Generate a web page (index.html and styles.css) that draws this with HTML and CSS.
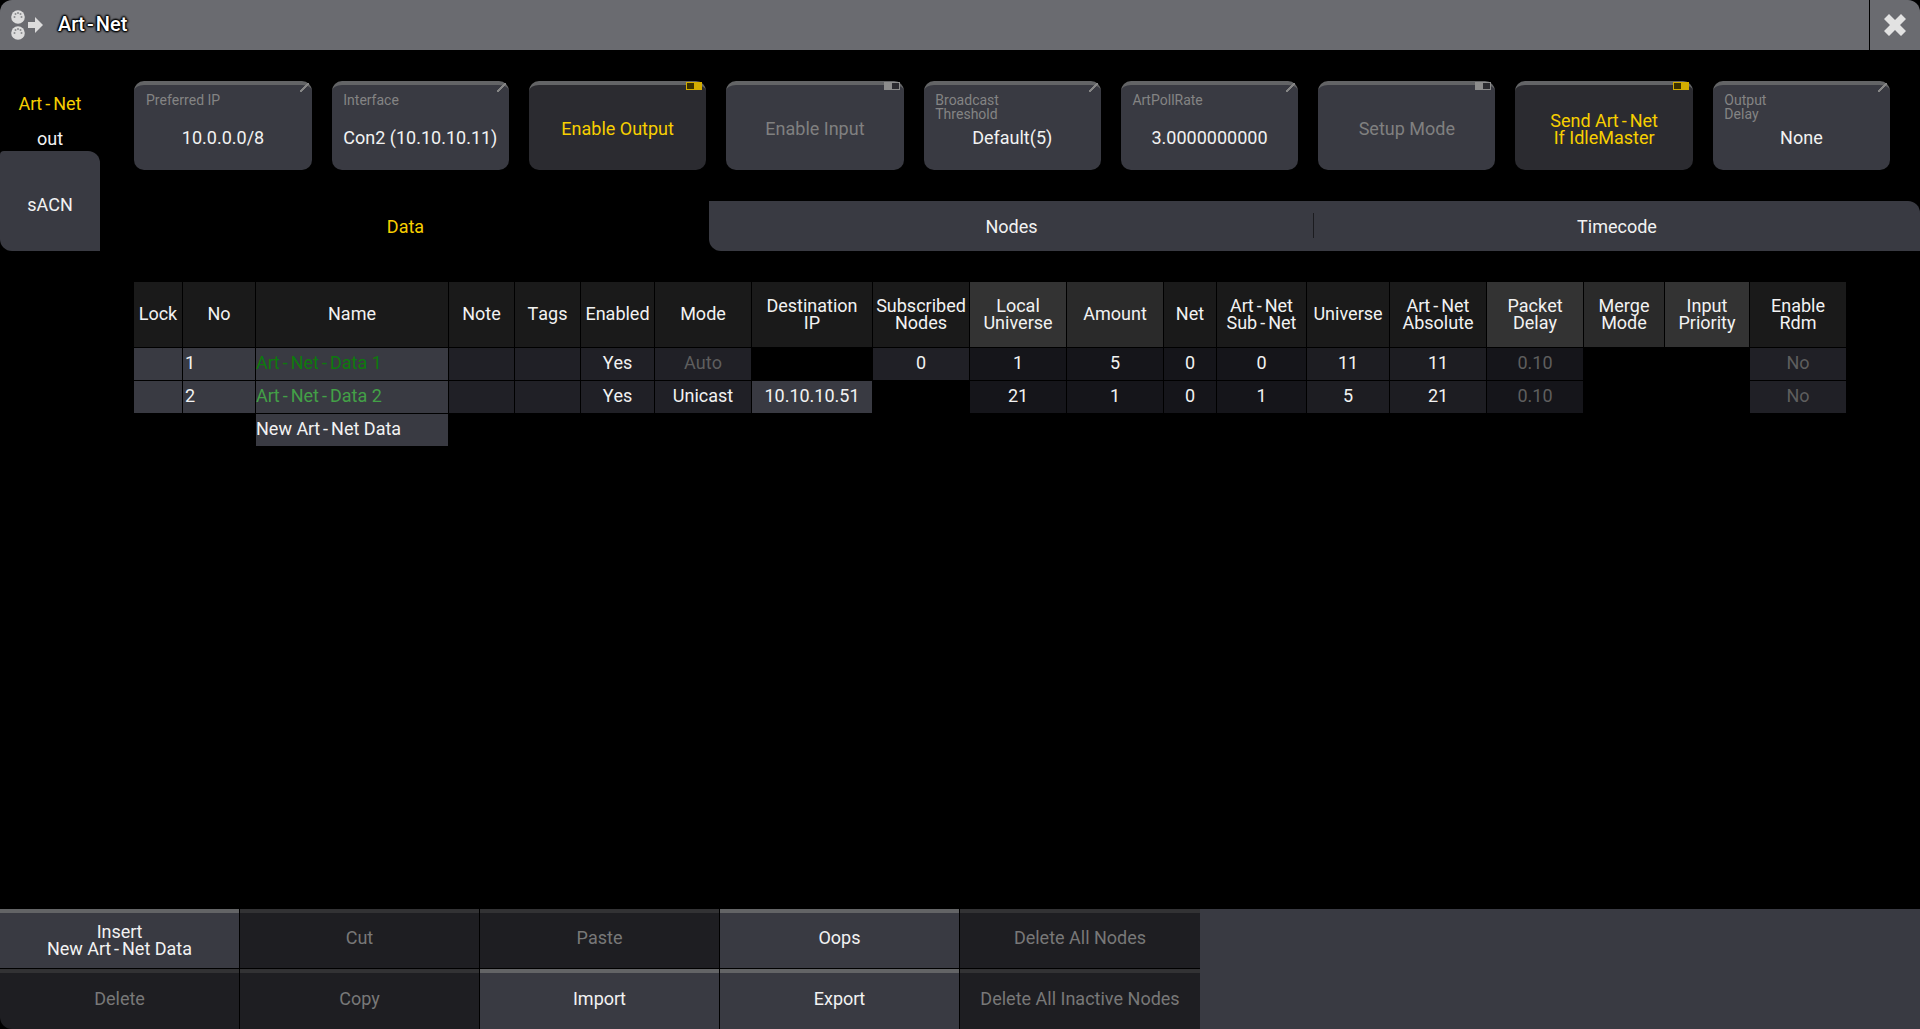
FILE: index.html
```html
<!DOCTYPE html>
<html lang="en">
<head>
  <meta charset="UTF-8">
  <meta name="viewport" content="width=device-width, initial-scale=1.0">
  <title>Art-Net</title>
  <link rel="stylesheet" href="styles.css">
</head>
<body>
  <div class="titlebar">
    <svg class="title-icon" width="46" height="40" viewBox="0 0 46 40">
      <circle cx="18" cy="17" r="6.8" fill="#dcdcdc"/>
      <circle cx="18" cy="33" r="6.8" fill="#dcdcdc"/>
      <g fill="#8a8b8e">
        <circle cx="14.5" cy="17" r="1"/><circle cx="15.5" cy="14" r="1"/><circle cx="18" cy="13" r="1"/><circle cx="20.5" cy="14" r="1"/><circle cx="21.5" cy="17" r="1"/>
        <circle cx="14.5" cy="33" r="1"/><circle cx="15.5" cy="30" r="1"/><circle cx="18" cy="29" r="1"/><circle cx="20.5" cy="30" r="1"/><circle cx="21.5" cy="33" r="1"/>
      </g>
      <path d="M28 22h7v-5l8 8-8 8v-5h-7z" fill="#dcdcdc"/>
    </svg>
    <span class="title-text">Art<span class="hy-s">-</span>Net</span>
    <div class="close">
      <svg width="24" height="24" viewBox="0 0 24 24"><path d="M6 1l6 6 6-6 5 5-6 6 6 6-5 5-6-6-6 6-5-5 6-6-6-6z" fill="#e2e2e2"/></svg>
    </div>
  </div>

  <div class="content">
    <div class="side">
      <div class="side-label yellow">Art<span class="hy">-</span>Net</div>
      <div class="side-label out">out</div>
      <div class="side-tab">sACN</div>
    </div>

    <div class="panel">
      <div class="toolbar">
        <div class="btn edit"><div class="btn-label">Preferred IP</div><div class="btn-value">10.0.0.0/8</div></div>
        <div class="btn edit"><div class="btn-label">Interface</div><div class="btn-value">Con2 (10.10.10.11)</div></div>
        <div class="btn plain on"><i class="toggle"></i>Enable Output</div>
        <div class="btn plain off"><i class="toggle"></i>Enable Input</div>
        <div class="btn edit"><div class="btn-label">Broadcast<br>Threshold</div><div class="btn-value">Default(5)</div></div>
        <div class="btn edit"><div class="btn-label">ArtPollRate</div><div class="btn-value">3.0000000000</div></div>
        <div class="btn plain off"><i class="toggle"></i>Setup Mode</div>
        <div class="btn plain on"><i class="toggle"></i><div>Send Art<span class="hy">-</span>Net<br>If IdleMaster</div></div>
        <div class="btn edit"><div class="btn-label">Output<br>Delay</div><div class="btn-value">None</div></div>
      </div>

      <div class="tabs">
        <div class="tab active">Data</div>
        <div class="tab nodes">Nodes</div>
        <div class="tab timecode">Timecode</div>
      </div>

      <div class="grid">
        <div class="th">Lock</div>
        <div class="th">No</div>
        <div class="th">Name</div>
        <div class="th">Note</div>
        <div class="th">Tags</div>
        <div class="th">Enabled</div>
        <div class="th">Mode</div>
        <div class="th two">Destination<br>IP</div>
        <div class="th two">Subscribed<br>Nodes</div>
        <div class="th two hi">Local<br>Universe</div>
        <div class="th mid">Amount</div>
        <div class="th">Net</div>
        <div class="th two"><div>Art<span class="hy">-</span>Net<br>Sub<span class="hy">-</span>Net</div></div>
        <div class="th">Universe</div>
        <div class="th two"><div>Art<span class="hy">-</span>Net<br>Absolute</div></div>
        <div class="th two hi">Packet<br>Delay</div>
        <div class="th two mid">Merge<br>Mode</div>
        <div class="th two hi">Input<br>Priority</div>
        <div class="th two">Enable<br>Rdm</div>

        <div class="td edit-cell"></div>
        <div class="td edit-cell left num">1</div>
        <div class="td edit-cell left green-dark"><span>Art<span class="hy">-</span>Net<span class="hy">-</span>Data 1</span></div>
        <div class="td soft"></div>
        <div class="td soft"></div>
        <div class="td soft">Yes</div>
        <div class="td soft dim">Auto</div>
        <div class="td"></div>
        <div class="td soft">0</div>
        <div class="td deep">1</div>
        <div class="td deep">5</div>
        <div class="td deep">0</div>
        <div class="td deep">0</div>
        <div class="td soft2">11</div>
        <div class="td soft2">11</div>
        <div class="td deep dim">0.10</div>
        <div class="td"></div>
        <div class="td"></div>
        <div class="td soft dim">No</div>

        <div class="td edit-cell"></div>
        <div class="td edit-cell left num">2</div>
        <div class="td edit-cell left green"><span>Art<span class="hy">-</span>Net<span class="hy">-</span>Data 2</span></div>
        <div class="td soft"></div>
        <div class="td soft"></div>
        <div class="td soft">Yes</div>
        <div class="td soft">Unicast</div>
        <div class="td edit-cell">10.10.10.51</div>
        <div class="td"></div>
        <div class="td deep">21</div>
        <div class="td deep">1</div>
        <div class="td deep">0</div>
        <div class="td deep">1</div>
        <div class="td soft2">5</div>
        <div class="td soft2">21</div>
        <div class="td deep dim">0.10</div>
        <div class="td"></div>
        <div class="td"></div>
        <div class="td soft dim">No</div>

        <div class="td new-row edit-cell left"><span>New Art<span class="hy">-</span>Net Data</span></div>
      </div>
    </div>
  </div>

  <div class="footer">
    <div class="foot-grid">
      <div class="foot-btn lit"><div class="foot-two">Insert<br>New Art<span class="hy">-</span>Net Data</div></div>
      <div class="foot-btn">Cut</div>
      <div class="foot-btn">Paste</div>
      <div class="foot-btn lit">Oops</div>
      <div class="foot-btn">Delete All Nodes</div>
      <div class="foot-btn">Delete</div>
      <div class="foot-btn">Copy</div>
      <div class="foot-btn lit">Import</div>
      <div class="foot-btn lit">Export</div>
      <div class="foot-btn">Delete All Inactive Nodes</div>
    </div>
    <div class="foot-fill"></div>
  </div>
</body>
</html>
```

FILE: styles.css
```css
* {
  margin: 0;
  padding: 0;
  box-sizing: border-box;
}

html {
  height: 1029px;
  overflow: hidden;
}

body {
  font-family: Roboto, "Liberation Sans", sans-serif;
  font-size: 18px;
  font-kerning: none;
  background-color: #000;
  color: #f2f2f2;
  width: 1920px;
  height: 1029px;
  overflow: hidden;
  display: flex;
  flex-direction: column;
}

/* the console font sets hyphens wide */
.hy {
  margin: 0 3px;
}

.hy-s {
  margin: 0 2px;
}

/* title bar */
.titlebar {
  height: 50px;
  display: flex;
  align-items: center;
  background-color: #6a6b70;
  border-radius: 12px 12px 0 0;
  flex-shrink: 0;
}

.title-icon {
  align-self: flex-start;
  margin-right: 12px;
}

.title-text {
  font-size: 20px;
  font-weight: 500;
  color: #fff;
  margin-bottom: 2px;
  text-shadow: 0 0 2px #000, 0 0 2px #000, 1px 0 2px #000, -1px 0 2px #000, 0 1px 2px #000, 0 -1px 2px #000;
}

.close {
  margin-left: auto;
  width: 51px;
  height: 50px;
  border-left: 1px solid #000;
  display: flex;
  align-items: center;
  justify-content: center;
}

/* main area */
.content {
  flex: 1;
  display: flex;
}

.side {
  width: 100px;
  flex-shrink: 0;
  padding-top: 42px;
  text-align: center;
}

.side-label {
  height: 24px;
  line-height: 24px;
}

.yellow {
  color: #f7cf00;
}

.side-label.out {
  height: 20px;
  line-height: 20px;
  margin: 13px 0 2px;
}

.side-tab {
  height: 100px;
  padding-top: 6px;
  background-color: #393a42;
  border-radius: 4px 12px 0 12px;
  display: flex;
  align-items: center;
  justify-content: center;
}

.panel {
  flex: 1;
}

.toolbar {
  display: flex;
  gap: 20px;
  padding: 31px 30px 0 34.4px;
}

.btn {
  position: relative;
  flex: 1;
  height: 89px;
  background-color: #393a42;
  border-top: 4px solid #636466;
  border-radius: 10px;
}

.btn.edit::after {
  content: "";
  position: absolute;
  top: -2px;
  right: 3px;
  width: 9px;
  height: 9px;
  background: linear-gradient(135deg, transparent 44%, #858585 44%, #858585 56%, transparent 56%);
}

.btn-label {
  height: 28px;
  margin: 8px 0 0 11.6px;
  font-size: 14px;
  line-height: 14px;
  color: #848484;
}

.btn-value {
  height: 34px;
  line-height: 34px;
  text-align: center;
}

.btn.plain {
  display: flex;
  align-items: center;
  justify-content: center;
  text-align: center;
  line-height: 17px;
  padding-top: 2px;
}

.btn.on {
  background-color: #2b2b30;
  color: #f7cf00;
}

.btn.off {
  color: #808080;
}

.toggle {
  position: absolute;
  top: -3px;
  right: 4px;
  width: 16px;
  height: 8px;
  border: 1px solid #000;
}

.on .toggle {
  background: linear-gradient(90deg, #3a3000 50%, #d3ac00 50%);
  border-color: #d3ac00;
}

.off .toggle {
  background: linear-gradient(90deg, #8c8c8c 50%, #2b2b30 50%);
  border-color: #8c8c8c;
}

.tabs {
  display: flex;
  height: 50px;
  margin-top: 31px;
}

.tab {
  display: flex;
  align-items: center;
  justify-content: center;
}

.tab.active {
  width: 609px;
  padding-left: 2px;
  color: #f7cf00;
}

.tab.nodes {
  width: 605px;
  background-color: #393a42;
  border-radius: 0 0 0 12px;
  position: relative;
}

.tab.nodes::after {
  content: "";
  position: absolute;
  right: 0;
  top: 12px;
  height: 25px;
  border-right: 1px solid #1b1b1f;
}

.tab.timecode {
  flex: 1;
  background-color: #393a42;
  border-radius: 0 12px 0 0;
}

/* table */
.grid {
  display: grid;
  grid-template-columns: 48px 72px 192px 65px 65px 73px 96px 120px 96px 96px 96px 52px 89px 82px 96px 96px 80px 84px 96px;
  grid-template-rows: 65px 32px 32px 32px;
  gap: 1px;
  margin: 31px 0 0 34px;
}

.th,
.td {
  display: flex;
  align-items: center;
  justify-content: center;
  text-align: center;
  line-height: 17px;
}

.th {
  background-color: #1a1a1a;
  padding-bottom: 3px;
}

.th.two {
  padding-bottom: 2px;
}

.td {
  padding-bottom: 4px;
}

.th.hi {
  background-color: #333;
}

.th.mid {
  background-color: #2a2a2a;
}

.edit-cell {
  background-color: #393a42;
}

.soft {
  background-color: #202026;
}

.soft2 {
  background-color: #1d1d22;
}

.deep {
  background-color: #15151a;
}

.left {
  justify-content: flex-start;
}

.num {
  padding-left: 2px;
}

.dim {
  color: #5e5e5e;
}

.green-dark {
  color: #0d7a0d;
}

.green {
  color: #43a047;
}

.new-row {
  grid-column: 3;
}

/* bottom buttons */
.footer {
  display: flex;
  height: 120px;
  flex-shrink: 0;
}

.foot-grid {
  display: grid;
  grid-template-columns: 239px 239px 239px 239px 240px;
  grid-template-rows: 59px 60px;
  gap: 1px;
  width: 1200px;
  border-bottom-left-radius: 12px;
  overflow: hidden;
}

.foot-btn {
  display: flex;
  align-items: center;
  justify-content: center;
  text-align: center;
  line-height: 17px;
  padding-bottom: 6px;
  background-color: #1e1e22;
  border-top: 4px solid #323234;
  color: #787878;
}

.foot-two {
  margin-top: 4px;
}

.foot-btn.lit {
  background-color: #393a42;
  border-top-color: #636466;
  color: #f2f2f2;
}

.foot-fill {
  flex: 1;
  background-color: #393a42;
}
```
